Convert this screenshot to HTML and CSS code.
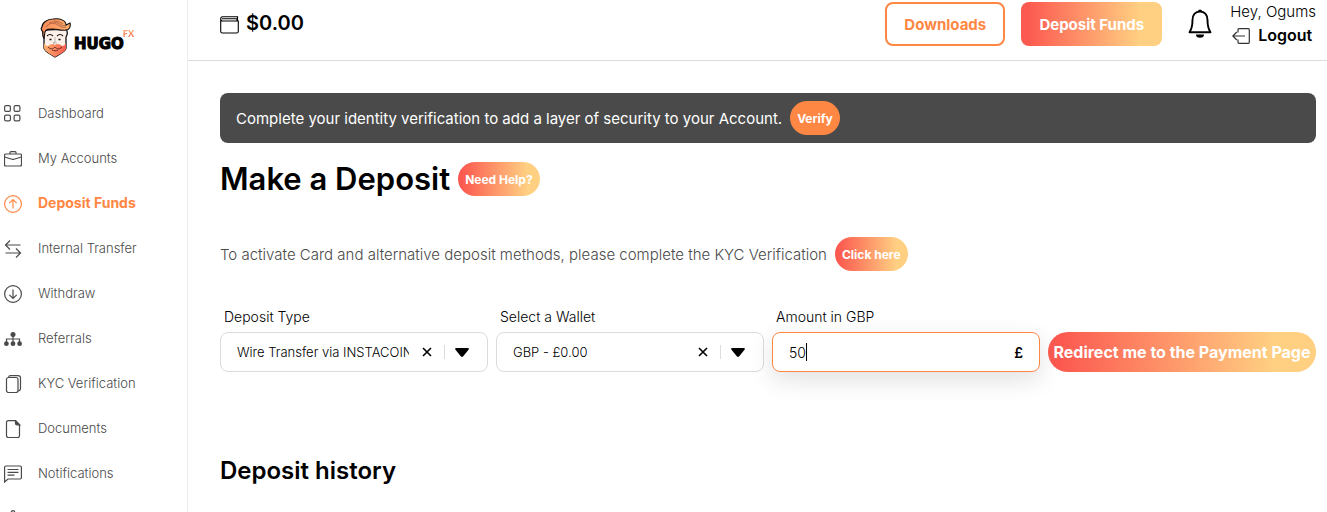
FILE: index.html
```html
<!DOCTYPE html>
<html lang="en">
<head>
<meta charset="utf-8">
<meta name="viewport" content="width=device-width, initial-scale=1">
<title>Hugo FX – Make a Deposit</title>
<link rel="stylesheet" href="styles.css">
</head>
<body>
<div class="app">
  <aside class="sidebar">
    <a class="logo" href="#">
      <svg class="logo-face" viewBox="0 0 32 40" aria-hidden="true">
        <defs>
          <linearGradient id="hair" x1="0" y1="0" x2="1" y2="0"><stop offset="0" stop-color="#fb8a58"/><stop offset="1" stop-color="#fcb070"/></linearGradient>
          <linearGradient id="beard" x1="0" y1="0" x2="1" y2="0"><stop offset="0" stop-color="#fdb070"/><stop offset="1" stop-color="#fa5c4c"/></linearGradient>
        </defs>
        <path d="M4 12c-2 2-1 5 0 7v11c1 4 7 6 11 9 4-3 11-5 11-9V19c2-3 2-5 0-8z" fill="#fdf1ea" stroke="#111" stroke-width="1.3"/>
        <path d="M4 25c1 2 2 3 4 3 2-2 5-3 7-1 2-2 5-1 7 1 2 0 3-1 4-3v5c0 4-7 6-11 9-4-3-10-5-11-9z" fill="url(#beard)"/>
        <path d="M8 29c3 3 5 2 7 0 2 2 4 3 7 0M12 32c2 1 4 1 6 0" fill="none" stroke="#5a2720" stroke-width=".9"/>
        <path d="M3 14C1 12 1 10 2 9c0-4 5-8 11-8 8-1 13 2 13 6l4-2c1 4-1 7-4 7-5 1-9-1-13-1-4 0-7 0-8 3l-1 6c-2-2-1-4-1-6z" fill="url(#hair)" stroke="#111" stroke-width="1.1"/>
        <path d="M6 9c3-4 7-5 12-2 3 2 5 3 8 2M9 5c4-2 8-1 12 2 2 1 4 1 5 0M14 3c4 0 6 1 9 3" fill="none" stroke="#8a4630" stroke-width=".6"/>
        <path d="M7 18c2-2 4-2 6 0M17 18c2-2 4-2 6 0" fill="none" stroke="#111" stroke-width="1.1"/>
        <path d="M9.500 21.500h2M18.500 21.500h2" stroke="#111" stroke-width="1.500"/>
        <path d="M15 19v5l-2 1h4" fill="none" stroke="#888" stroke-width=".6"/>
      </svg>
      <span class="logo-name">HUGO</span><sup class="logo-fx">FX</sup>
    </a>
    <nav class="nav">
      <a href="#"><svg viewBox="0 0 18 18"><rect x=".6" y=".6" width="5.8" height="5.8" rx="1.4"/><rect x="10.1" y=".6" width="5.8" height="5.8" rx="1.4"/><rect x=".6" y="10.1" width="5.8" height="5.8" rx="1.4"/><rect x="10.1" y="10.1" width="5.8" height="5.8" rx="1.4"/></svg>Dashboard</a>
      <a href="#"><svg viewBox="0 0 18 18"><rect x=".5" y="4" width="17" height="12" rx="1.4"/><path d="M6 4V2.6q0-.9.9-.9h4.2q.9 0 .9.9V4M.5 7 8 9.3q1 .3 2 0L17.500 7"/></svg>My Accounts</a>
      <a class="active" href="#" aria-current="page"><svg viewBox="0 0 18 18"><circle cx="9" cy="9" r="8.400"/><path d="M9 13.500v-9M5.300 8.200 9 4.500l3.700 3.700"/></svg>Deposit Funds</a>
      <a href="#"><svg viewBox="0 0 18 18"><path d="M16.500 5H1.500M6 .5 1.500 5 6 9.500M1.500 13h15M12 8.500l4.500 4.500-4.500 4.500"/></svg>Internal Transfer</a>
      <a href="#"><svg viewBox="0 0 18 18"><circle cx="9" cy="9" r="8.400"/><path d="M9 4.500v9M5.300 9.800 9 13.500l3.700-3.700"/></svg>Withdraw</a>
      <a href="#"><svg viewBox="0 0 18 18"><path d="M9 4v8M2.500 13V9h13v4"/><g fill="currentColor" stroke="none"><circle cx="9" cy="4.500" r="2.500"/><circle cx="2.400" cy="13.700" r="2.400"/><circle cx="9" cy="13.700" r="2.400"/><circle cx="15.600" cy="13.700" r="2.400"/></g></svg>Referrals</a>
      <a href="#"><svg viewBox="0 0 18 18"><rect x="2.500" y="2.500" width="11.500" height="15" rx="2"/><path d="M4.500 2.500q.3-1.900 2-1.900h7.500q2.500 0 2.500 2.500v10.500q0 2-2.500 2.400"/></svg>KYC Verification</a>
      <a href="#"><svg viewBox="0 0 18 18"><path d="M4.500.6h7L15.500 5v10.500q0 2-2 2h-9q-2 0-2-2v-13q0-1.900 2-1.900z"/><path d="M11.500.6v3q0 1.200 1.200 1.200h3z" fill="currentColor"/></svg>Documents</a>
      <a href="#"><svg viewBox="0 0 18 18"><path d="M.6 17V2.200Q.6 1 1.800 1h14.400q1.200 0 1.200 1.200v10.600q0 1.200-1.200 1.200H4zM3.500 4.500h11M3.500 7.300h11M3.500 10.100h7"/></svg>Notifications</a>
      <a href="#" aria-label="Profile"><svg viewBox="0 0 18 18"><circle cx="9" cy="2.500" r="1.800"/><path d="M3 17.500V10q0-5 6-5t6 5v7.500z"/></svg></a>
    </nav>
  </aside>

  <div class="page">
    <header class="topbar">
      <div class="balance">
        <svg viewBox="0 0 19 18" aria-hidden="true"><path d="M.7 3v12.200q0 1.800 1.800 1.800h14q1.800 0 1.800-1.800V5H2.500Q.7 5 .7 3 .7.800 2.500.8h15.700M2 2.800h15V5M17.500.8V5"/></svg>
        <span>$0.00</span>
      </div>
      <div class="actions">
        <button class="btn btn-outline" type="button">Downloads</button>
        <button class="btn btn-fill" type="button">Deposit Funds</button>
        <button class="bell" type="button" aria-label="Notifications">
          <svg viewBox="0 0 24 30"><path d="M12 2.500c-4.800 0-7.500 3.500-7.500 8.500 0 5.500-.8 9-3 12.300h21c-2.200-3.300-3-6.800-3-12.300 0-5-2.700-8.500-7.500-8.500z" fill="none" stroke="#000" stroke-width="1.900" stroke-linejoin="round"/><path d="M10 2.500a2 2 0 0 1 4 0zM8 25.500h8a4 3.300 0 0 1-8 0z"/></svg>
        </button>
        <div class="user">
          <span class="hello">Hey, Ogums</span>
          <a class="logout" href="#"><svg viewBox="0 0 18 16"><path d="M6 4.500V1.700q0-1 1-1h9.300q1 0 1 1v12.600q0 1-1 1H7q-1 0-1-1v-2.800M13 8H.8M4.800 4 .8 8l4 4"/></svg>Logout</a>
        </div>
      </div>
    </header>

    <main class="content">
      <div class="banner">Complete your identity verification to add a layer of security to your Account.
        <button class="pill pill-flat" type="button">Verify</button>
      </div>
      <div class="title-row">
        <h1>Make a Deposit</h1>
        <button class="pill" type="button">Need Help?</button>
      </div>
      <div class="notice">To activate Card and alternative deposit methods, please complete the KYC Verification
        <button class="pill" type="button">Click here</button>
      </div>

      <form class="deposit-form">
        <div class="field">
          <label for="type">Deposit Type</label>
          <div class="control">
            <select id="type"><option>Wire Transfer via INSTACOINS</option></select>
            <button class="clear" type="button" aria-label="Clear deposit type"><svg viewBox="0 0 10 10"><path d="m1 1 8 8M9 1 1 9"/></svg></button>
            <svg class="caret" viewBox="0 0 14 9" aria-hidden="true"><path d="M1 0h12q1.400.4.500 1.700L8 8.500q-1 .8-2 0L.5 1.700Q-.4.400 1 0z"/></svg>
          </div>
        </div>
        <div class="field">
          <label for="wallet">Select a Wallet</label>
          <div class="control">
            <select id="wallet"><option>GBP - £0.00</option></select>
            <button class="clear" type="button" aria-label="Clear wallet"><svg viewBox="0 0 10 10"><path d="m1 1 8 8M9 1 1 9"/></svg></button>
            <svg class="caret" viewBox="0 0 14 9" aria-hidden="true"><path d="M1 0h12q1.400.4.500 1.700L8 8.500q-1 .8-2 0L.5 1.700Q-.4.400 1 0z"/></svg>
          </div>
        </div>
        <div class="field">
          <label for="amount">Amount in GBP</label>
          <div class="control control-focus">
            <input id="amount" type="text" inputmode="decimal" value="50">
            <span class="currency">£</span>
            <span class="text-cursor"></span>
          </div>
        </div>
        <button class="submit" type="submit">Redirect me to the Payment Page</button>
      </form>

      <h2>Deposit history</h2>
    </main>
  </div>
</div>
</body>
</html>
```
FILE: styles.css
```css
:root {
  --orange: #ff8744;
  --fire: linear-gradient(90deg, #fc5a50 5%, #ffcf82 84%);
  --grey: #4a4a4a;
  --line: #dcdcdf;
}
* { box-sizing: border-box; }
body {
  margin: 0;
  font-family: Inter, "Open Sans", sans-serif;
  font-size: 14px;
  color: #000;
  background: #fff;
}
button, input, select { font: inherit; color: inherit; }
button { border: 0; padding: 0; background: none; cursor: pointer; white-space: nowrap; }
a { color: inherit; text-decoration: none; }
h1, h2 { margin: 0; font-weight: 600; }

.app { display: flex; height: 100vh; overflow: hidden; }

.sidebar { flex: 0 0 188px; border-right: 1px solid #ebebee; overflow: hidden; }
.logo { display: flex; align-items: center; height: 90px; padding: 0 0 14px 40px; }
.logo-face { width: 32px; height: 40px; }
.logo-name {
  margin: 11px 0 0 2px;
  font: 700 15px/16px "DejaVu Sans", sans-serif;
  -webkit-text-stroke: 1px #000;
}
.logo-fx {
  margin: 0 0 8px -1px;
  font: 900 9px/10px Lato, sans-serif;
  color: transparent;
  background: linear-gradient(#ffb070, #fb604b);
  background-clip: text;
}
.nav a {
  display: flex;
  align-items: center;
  gap: 16px;
  height: 45px;
  padding-left: 4px;
  font-size: 13px;
  font-weight: 300;
  color: var(--grey);
}
.nav svg { flex: none; width: 18px; height: 18px; fill: none; stroke: currentColor; stroke-width: 1.2; margin-top: 2px; }
.nav .active { color: var(--orange); font-size: 14px; font-weight: 700; }

.page { flex: 1; min-width: 0; overflow: hidden; }
.topbar {
  display: flex;
  justify-content: space-between;
  height: 61px;
  padding: 0 11px 0 32px;
  border-bottom: 1px solid var(--line);
}
.balance { display: flex; align-items: center; gap: 7px; padding-bottom: 14px; font-size: 20px; font-weight: 600; }
.balance svg { width: 19px; height: 18px; fill: none; stroke: #000; stroke-width: 1.1; margin-top: 3px; }
.actions { display: flex; align-items: flex-start; padding-top: 2px; }
.btn { height: 44px; border-radius: 8px; padding: 0 16px; font-size: 15px; font-weight: 700; }
.btn-outline { min-width: 120px; border: 2px solid var(--orange); color: var(--orange); }
.btn-fill { min-width: 141px; margin-left: 16px; color: #fff; background: var(--fire); }
.bell { width: 24px; height: 30px; margin: 7px 18px 0 26px; }
.bell svg { display: block; }
.user { display: flex; flex-direction: column; font-size: 16px; line-height: 20px; }
.hello { font-size: 15px; font-weight: 300; }
.logout { display: flex; align-items: center; gap: 8px; margin-top: 3px; padding-left: 2px; font-weight: 600; }
.logout svg { width: 18px; height: 16px; fill: none; stroke: #333; stroke-width: 1.2; margin-top: 2px; }

.content { padding: 32px 11px 0 32px; }
.banner, .title-row, .notice { display: flex; align-items: center; gap: 8px; }
.banner {
  min-height: 50px;
  padding: 8px 16px;
  border-radius: 8px;
  background: var(--grey);
  color: #fff;
  font-size: 15px;
}
.pill {
  height: 34px;
  padding: 0 7px;
  border-radius: 17px;
  font-size: 12px;
  font-weight: 700;
  color: #fff;
  background: var(--fire);
}
.pill-flat { background: var(--orange); }
.title-row { margin-top: 19px; }
h1 { font-size: 31px; line-height: 34px; }
.notice { margin-top: 41px; font-size: 15px; font-weight: 300; color: var(--grey); }

.deposit-form {
  display: grid;
  grid-template-columns: repeat(4, minmax(0, 1fr));
  gap: 8px;
  align-items: end;
  margin-top: 36px;
}
.field label { display: block; padding: 0 4px; line-height: 20px; font-weight: 300; margin-bottom: 5px; }
.control {
  position: relative;
  display: flex;
  align-items: center;
  height: 40px;
  padding: 0 18px 0 16px;
  border: 1px solid var(--line);
  border-radius: 8px;
  background: #fff;
  font-weight: 300;
}
.control select, .control input {
  flex: 1;
  min-width: 0;
  height: 36px;
  padding: 0;
  border: 0;
  outline: 0;
  background: none;
  appearance: none;
}
.control select { font-size: 13px; text-overflow: clip; }
.clear { display: flex; align-items: center; height: 14px; padding: 0 12px 0 13px; border-right: 1px solid var(--line); }
.clear svg { width: 10px; height: 10px; stroke: #000; stroke-width: 1.6; }
.caret { width: 14px; height: 9px; margin-left: 10px; }
.control-focus { padding-right: 16px; border-color: var(--orange); box-shadow: 0 8px 24px rgba(0, 0, 0, .12); }
.currency { font-weight: 600; }
.text-cursor { position: absolute; left: 33px; top: 10px; width: 1px; height: 18px; background: #000; }
.submit {
  height: 40px;
  border-radius: 20px;
  font-size: 16px;
  font-weight: 700;
  color: #fff;
  background: var(--fire);
}
h2 { margin-top: 84px; font-size: 24px; line-height: 30px; }
```
